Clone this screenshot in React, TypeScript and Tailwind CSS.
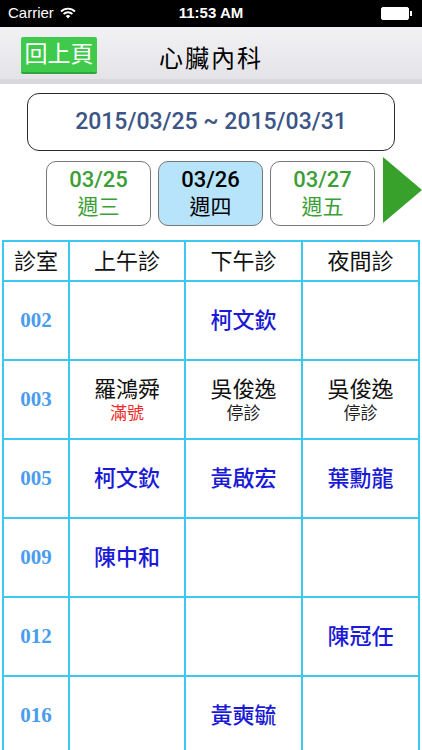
import React from "react";

type Slot = { name: string; note?: string; status?: "full" | "off" };
type Row = { room: string; slots: (Slot | null)[] };

const rows: Row[] = [
	{ room: "002", slots: [null, { name: "柯文欽" }, null] },
	{
		room: "003",
		slots: [
			{ name: "羅鴻舜", note: "滿號", status: "full" },
			{ name: "吳俊逸", note: "停診", status: "off" },
			{ name: "吳俊逸", note: "停診", status: "off" },
		],
	},
	{ room: "005", slots: [{ name: "柯文欽" }, { name: "黃啟宏" }, { name: "葉勳龍" }] },
	{ room: "009", slots: [{ name: "陳中和" }, null, null] },
	{ room: "012", slots: [null, null, { name: "陳冠任" }] },
	{ room: "016", slots: [null, { name: "黃奭毓" }, null] },
];

const days = [
	{ date: "03/25", week: "週三" },
	{ date: "03/26", week: "週四", active: true },
	{ date: "03/27", week: "週五" },
];

const cjk = "font-['Helvetica','Liberation_Sans','Noto_Sans_CJK_TC',sans-serif]";

function StatusBar() {
	return (
		<div className="relative flex h-[27px] items-center bg-black px-2 text-white font-['Liberation_Sans',sans-serif]">
			<span className="text-[15px]">Carrier</span>
			<svg className="ml-[6px] mt-[-2px]" width="16" height="12" viewBox="0 0 16 12">
				<path d="M1 4.5a10 10 0 0 1 14 0" stroke="white" strokeWidth="1.8" fill="none" />
				<path d="M3.6 7a6.4 6.4 0 0 1 8.8 0" stroke="white" strokeWidth="1.8" fill="none" />
				<path d="M8 11.5l-2.3-2.4a3.3 3.3 0 0 1 4.6 0z" fill="white" />
			</svg>
			<span className="absolute left-1/2 -translate-x-1/2 text-[15px] font-bold">11:53 AM</span>
			<div className="ml-auto mr-[2px] flex items-center">
				<div className="h-[13px] w-[28px] rounded-[2px] border border-white bg-white" />
				<div className="ml-[1px] h-[5px] w-[2px] bg-white" />
			</div>
		</div>
	);
}

function NavBar() {
	return (
		<div>
			<div className="relative flex h-[52px] items-center bg-gradient-to-b from-[#f2f2f5] to-[#e4e4e8] px-[21px]">
				<button
					className={`mt-[4px] flex h-[37px] w-[76px] items-center justify-center rounded-[2px] border-b-2 border-[#2ea63b] bg-[#3fca4c] text-[23px] text-white ${cjk}`}
				>
					回上頁
				</button>
				<h1
					className={`absolute left-1/2 top-[14px] -translate-x-1/2 text-[24px] tracking-[2px] text-black ${cjk}`}
				>
					心臟內科
				</h1>
			</div>
			<div className="h-[5px] bg-[#d9d9dd]" />
		</div>
	);
}

export default function App() {
	return (
		<div className="h-[750px] w-[422px] overflow-hidden bg-white">
			<StatusBar />
			<NavBar />

			<div className="ml-[27px] mt-[9px] flex h-[58px] w-[368px] items-center justify-center rounded-[12px] border-[1.5px] border-[#2a2a2a]">
				<span className="font-['Roboto',sans-serif] text-[23px] font-medium text-[#3b5586]">
					2015/03/25 ~ 2015/03/31
				</span>
			</div>

			<div className="mt-[6px] flex items-start">
				<div className="ml-[46px] mt-[4px] flex gap-[7px]">
					{days.map((d) => (
						<button
							key={d.date}
							className={`flex h-[65px] w-[105px] flex-col items-center justify-center rounded-[10px] border-[1.5px] border-[#777] ${
								d.active ? "bg-[#b8e4fb] text-black" : "bg-white text-[#3b9f35]"
							}`}
						>
							<span className="font-['Roboto',sans-serif] text-[22px] font-medium leading-[26px]">
								{d.date}
							</span>
							<span className={`text-[21px] leading-[27px] ${cjk}`}>{d.week}</span>
						</button>
					))}
				</div>
				<svg className="ml-[8px]" width="39" height="66" viewBox="0 0 39 66">
					<path d="M0 0L39 33L0 66z" fill="#37a12b" />
				</svg>
			</div>

			<div className="mx-[2px] mt-[14px] grid grid-cols-[64px_114px_115px_115px] gap-[2px] bg-[#3cc8f0] p-[2px]">
				{["診室", "上午診", "下午診", "夜間診"].map((h) => (
					<div
						key={h}
						className={`flex h-[38px] items-center justify-center bg-white text-[22px] text-[#111] ${cjk}`}
					>
						{h}
					</div>
				))}
				{rows.map((r) => (
					<React.Fragment key={r.room}>
						<div className="flex h-[77px] items-center justify-center bg-white font-['Liberation_Serif',serif] text-[21px] font-bold text-[#4a9cee]">
							{r.room}
						</div>
						{r.slots.map((s, i) => (
							<div
								key={i}
								className={`flex h-[77px] flex-col items-center justify-center bg-white ${cjk}`}
							>
								{s && (
									<>
										<span
											className={`text-[22px] leading-[28px] ${
												s.status ? "text-[#111]" : "font-medium text-[#1a1ad6]"
											}`}
										>
											{s.name}
										</span>
										{s.note && (
											<span
												className={`text-[17px] leading-[20px] ${
													s.status === "full" ? "text-[#f02a2a]" : "text-[#222]"
												}`}
											>
												{s.note}
											</span>
										)}
									</>
								)}
							</div>
						))}
					</React.Fragment>
				))}
			</div>
		</div>
	);
}
